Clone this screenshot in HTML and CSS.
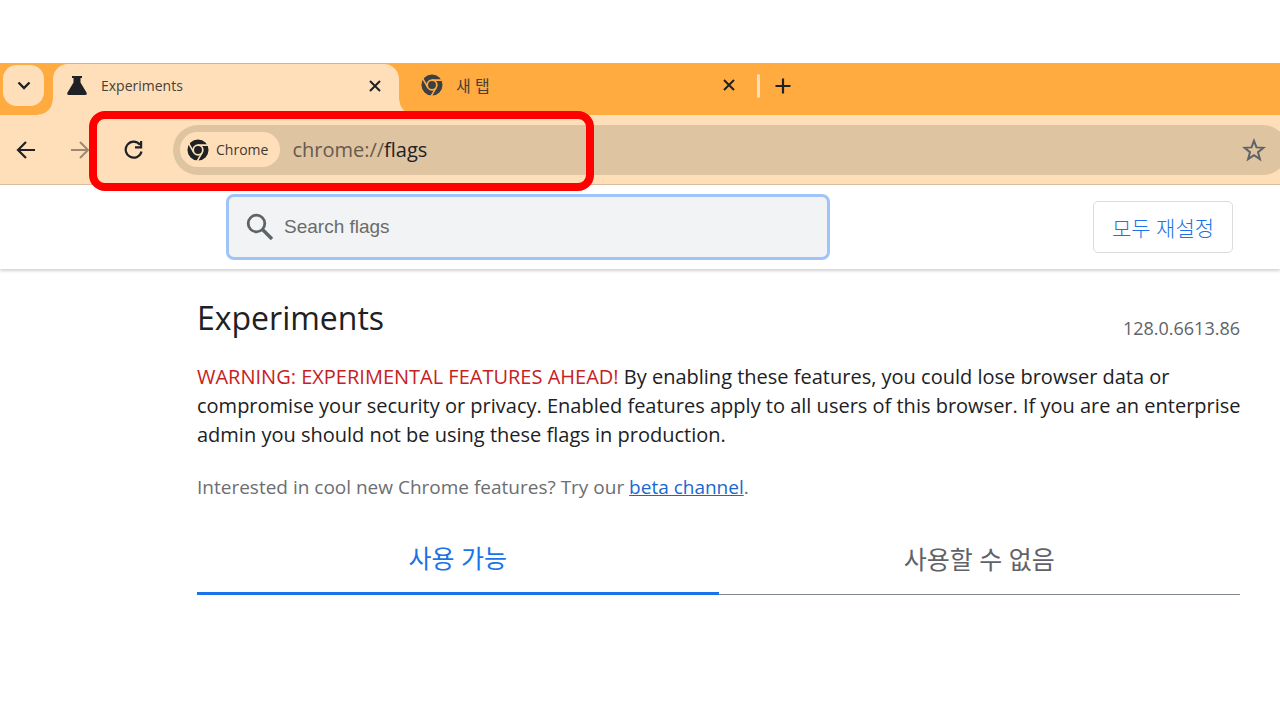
FILE: index.html
```
<!DOCTYPE html>
<html lang="ko">

<head>
  <meta charset="utf-8">
  <meta name="viewport" content="width=device-width">
  <title>Experiments</title>

  <link rel="stylesheet" href="styles.css">
</head>

<body>
  <svg class="defs" width="0" height="0">
    <symbol id="chrome-logo" viewBox="0 0 24 24">
      <circle cx="12" cy="12" r="8.5" fill="none" stroke="currentColor" stroke-width="6" />
      <path d="M12 6.700H24M7.400 14.600L1.600 4.500M16.600 14.600L10.800 24.700" fill="none" stroke="var(--gap)" stroke-width="1.700" />
      <circle cx="12" cy="12" r="6.200" fill="var(--gap)" />
      <circle cx="12" cy="12" r="4.300" fill="currentColor" />
    </symbol>
    <symbol id="close" viewBox="0 0 12 12">
      <path d="M1 1l10 10M11 1L1 11" fill="none" stroke="currentColor" stroke-width="2" />
    </symbol>
  </svg>

  <div class="browser">
    <div class="tab-strip">
      <div class="tab-search-wrap">
        <button class="tab-search" aria-label="Search tabs">
          <svg width="14" height="9" viewBox="0 0 14 9"><path d="M1.500 1.500L7 7l5.500-5.500" fill="none" stroke="currentColor" stroke-width="2.400" /></svg>
        </button>
      </div>
      <div class="tab active">
        <svg class="tab-icon" width="22" height="22" viewBox="0 0 22 22">
          <path d="M6 1h10v2h-1.500v4.500L20.500 17.500Q21.500 20 19 20H3Q.500 20 1.500 17.500L7.500 7.500V3H6z" fill="currentColor" />
        </svg>
        <span class="tab-title">Experiments</span>
        <button class="tab-close" aria-label="Close tab"><svg width="12" height="12"><use href="#close" /></svg></button>
      </div>
      <div class="tab">
        <svg class="tab-icon" width="22" height="22"><use href="#chrome-logo" /></svg>
        <span class="tab-title korean">새 탭</span>
        <button class="tab-close" aria-label="Close tab"><svg width="12" height="12"><use href="#close" /></svg></button>
      </div>
      <div class="separator"></div>
      <button class="new-tab" aria-label="New tab">
        <svg width="16" height="16" viewBox="0 0 16 16"><path d="M8 0.500v15M0.500 8h15" stroke="currentColor" stroke-width="2.200" /></svg>
      </button>
    </div>

    <div class="toolbar">
      <button class="nav" aria-label="Back">
        <svg width="20" height="20" viewBox="0 0 20 20"><path d="M19 10H2.500M10 2L2 10l8 8" fill="none" stroke="currentColor" stroke-width="2.200" /></svg>
      </button>
      <button class="nav disabled" aria-label="Forward" disabled>
        <svg width="20" height="20" viewBox="0 0 20 20"><path d="M1 10h16.500M10 2l8 8-8 8" fill="none" stroke="currentColor" stroke-width="2" /></svg>
      </button>
      <button class="nav" aria-label="Reload">
        <svg width="20" height="20" viewBox="0 0 20 20">
          <path d="M17.500 11.500A8 8 0 1 1 16 4.700" fill="none" stroke="currentColor" stroke-width="2.200" />
          <path d="M18.200 1v7.500H11V6.300h5V1z" fill="currentColor" />
        </svg>
      </button>
      <div class="omnibox">
        <button class="chip">
          <svg width="22" height="22"><use href="#chrome-logo" /></svg>
          Chrome
        </button>
        <label class="scheme" for="url">chrome://</label>
        <input class="url" id="url" type="text" value="flags">
        <button class="bookmark" aria-label="Bookmark this tab">
          <svg width="24" height="24" viewBox="0 0 24 24">
            <path d="M12 2.800l2.500 6.600 7 .4-5.500 4.400 1.900 6.900-5.900-3.900-5.900 3.900 1.900-6.900-5.500-4.400 7-.4z" fill="none" stroke="currentColor" stroke-width="2" />
          </svg>
        </button>
      </div>
      <div class="highlight"></div>
    </div>

    <header class="header">
      <div class="search">
        <svg width="28" height="28" viewBox="0 0 28 28">
          <circle cx="10.500" cy="10.500" r="8.300" fill="none" stroke="currentColor" stroke-width="2.800" />
          <path d="M16.500 16.500L26 26" stroke="currentColor" stroke-width="3.400" />
        </svg>
        <input type="text" placeholder="Search flags" aria-label="Search flags">
      </div>
      <button class="reset">모두 재설정</button>
    </header>

    <main class="content">
      <div class="title-row">
        <h1>Experiments</h1>
        <span class="version">128.0.6613.86</span>
      </div>
      <p class="blurb"><span class="warning">WARNING: EXPERIMENTAL FEATURES AHEAD!</span> By enabling these features, you could lose browser data or compromise your security or privacy. Enabled features apply to all users of this browser. If you are an enterprise admin you should not be using these flags in production.</p>
      <p class="promo">Interested in cool new Chrome features? Try our <a href="#beta">beta channel</a>.</p>
      <div class="tabs" role="tablist">
        <button class="selected" role="tab" aria-selected="true">사용 가능</button>
        <button role="tab" aria-selected="false">사용할 수 없음</button>
      </div>
    </main>
  </div>
</body>

</html>
```
FILE: styles.css
```
* {
  box-sizing: border-box;
}

body {
  margin: 0;
  background: #fff;
  color: #202124;
  font-family: "Open Sans", "Noto Sans CJK KR", sans-serif;
  overflow-x: hidden;
}

button,
input {
  border: 0;
  padding: 0;
  background: none;
  color: inherit;
  font: inherit;
}

svg {
  display: block;
  flex: none;
}

.defs {
  position: absolute;
}

.browser {
  padding-top: 63px;
}

/* tab strip */

.tab-strip {
  display: flex;
  height: 52px;
  background: #ffab40;
}

.tab-search-wrap {
  width: 53px;
  padding: 2px 3px;
}

.tab-search {
  display: grid;
  place-items: center;
  width: 41px;
  height: 41px;
  border-radius: 14px;
  background: #ffdfb9;
}

.tab {
  --gap: #ffab40;
  position: relative;
  display: flex;
  align-items: center;
  width: 346px;
  height: 44px;
  padding: 0 8px 0 22px;
  color: #3c4043;
  font-size: 14px;
}

.tab.active {
  height: 51px;
  margin-top: 1px;
  padding: 0 16px 8px 13px;
  border-radius: 15px 15px 0 0;
  background: #ffdfb9;
  color: #202124;
}

.tab.active::before,
.tab.active::after {
  content: "";
  position: absolute;
  bottom: 0;
  width: 15px;
  height: 15px;
}

.tab.active::before {
  right: 100%;
  background: radial-gradient(circle at 0 0, transparent 14px, #ffdfb9 15px);
}

.tab.active::after {
  left: 100%;
  background: radial-gradient(circle at 100% 0, transparent 14px, #ffdfb9 15px);
}

.tab-title {
  flex: 1;
  margin-left: 13px;
  color: #45403a;
}

.tab-title.korean {
  font-size: 16px;
}

.tab-close {
  padding: 2px;
  color: #202124;
}

.separator {
  width: 3px;
  height: 24px;
  margin: 11px 0 0 12px;
  border-radius: 2px;
  background: #ffdfb9;
}

.new-tab {
  display: grid;
  place-items: center;
  width: 46px;
  height: 45px;
}

/* toolbar */

.toolbar {
  position: relative;
  display: flex;
  align-items: center;
  gap: 14px;
  height: 70px;
  padding-left: 6px;
  border-bottom: 1px solid #d9bfa0;
  background: #ffdfb9;
}

.nav {
  display: grid;
  place-items: center;
  width: 40px;
  height: 40px;
}

.nav.disabled {
  color: #9d8872;
}

.omnibox {
  display: flex;
  flex: 1;
  align-items: center;
  height: 50px;
  margin: 0 -8px 0 5px;
  padding: 0 22px 0 7px;
  border-radius: 25px;
  background: #dfc4a1;
}

.chip {
  --gap: #ffdfb9;
  display: flex;
  align-items: center;
  gap: 7px;
  height: 35px;
  margin-right: 12px;
  padding: 0 12px 0 7px;
  border-radius: 18px;
  background: #ffdfb9;
  color: #3c3934;
  font-size: 14px;
}

.chip svg {
  color: #202124;
}

.scheme {
  color: #655b50;
  font-size: 20px;
}

.url {
  flex: 1;
  min-width: 0;
  font-size: 20px;
}

.bookmark {
  color: #5f6368;
}

.highlight {
  position: absolute;
  top: -4px;
  left: 89px;
  width: 505px;
  height: 80px;
  border: 8px solid #f00;
  border-radius: 16px;
  pointer-events: none;
}

/* flags page */

.header {
  display: flex;
  align-items: center;
  height: 84px;
  padding: 0 47px 0 226px;
  box-shadow: 0 2px 3px rgba(0, 0, 0, 0.18);
}

.search {
  display: flex;
  flex: 0 1 604px;
  align-items: center;
  gap: 10px;
  height: 66px;
  padding: 0 17px;
  border: 3px solid #a1c4f7;
  border-radius: 8px;
  background: #f1f3f4;
  color: #5f6368;
}

.search input {
  flex: 1;
  min-width: 0;
  outline: 0;
  font-family: "Liberation Sans", Arial, sans-serif;
  font-size: 19px;
}

.search input::placeholder {
  color: #6b6b6b;
}

.reset {
  width: 140px;
  height: 52px;
  margin-left: auto;
  border: 1px solid #dadce0;
  border-radius: 5px;
  color: #1a73e8;
  font-size: 21px;
  font-weight: 300;
}

.content {
  padding: 26px 40px 0 197px;
}

.title-row {
  display: flex;
  align-items: flex-end;
  justify-content: space-between;
}

h1 {
  margin: 0;
  font-size: 32px;
  font-weight: 400;
  line-height: 46px;
}

.version {
  color: #5f6368;
  font-size: 18px;
  line-height: 26px;
}

.blurb {
  margin: 21px -12px 0 0;
  font-size: 20px;
  line-height: 29px;
}

.promo {
  margin: 24px 0 0;
  color: #6b6e72;
  font-size: 19px;
  line-height: 29px;
}

.warning {
  color: #c5221f;
}

.promo a {
  color: #1967d2;
}

.tabs {
  display: grid;
  grid-template-columns: 1fr 1fr;
  margin-top: 23px;
}

.tabs button {
  height: 70px;
  padding-bottom: 4px;
  border-bottom: 1px solid #80868b;
  color: #5f6368;
  font-size: 25px;
}

.tabs .selected {
  border-bottom: 3px solid #1a73e8;
  color: #1a73e8;
}
```
